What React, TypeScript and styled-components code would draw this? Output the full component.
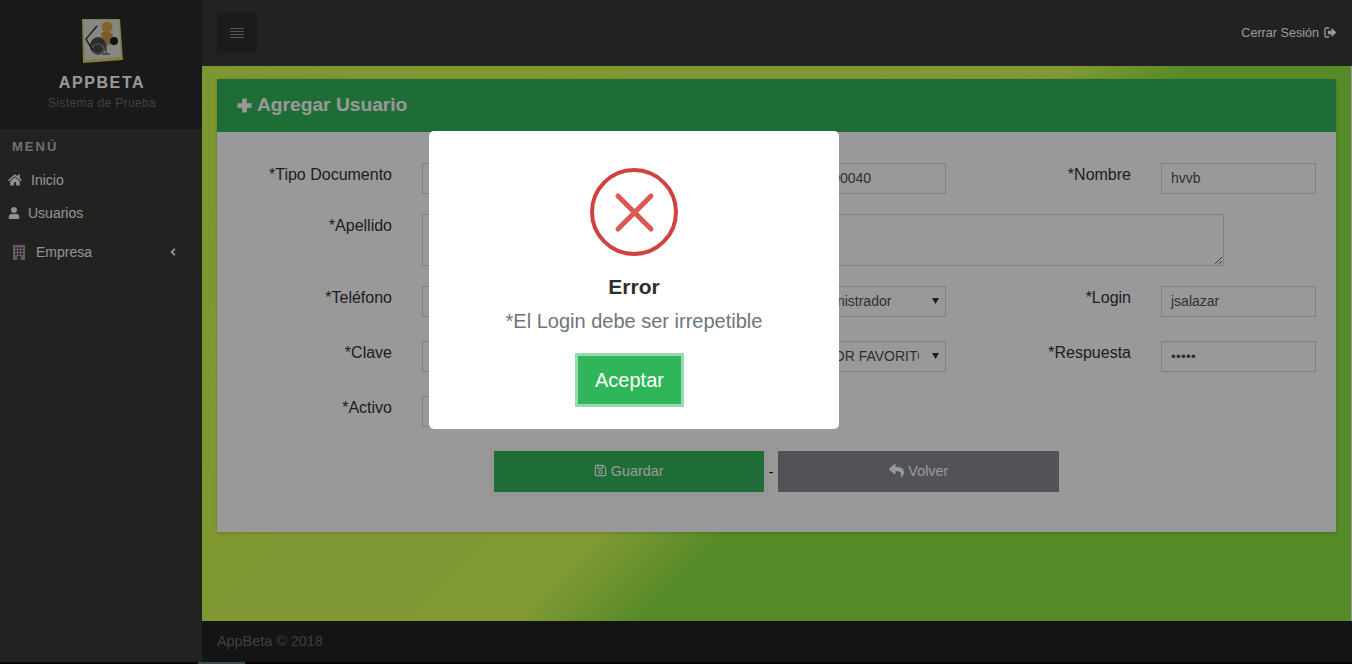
import styled, { createGlobalStyle } from "styled-components";
import { FaAngleLeft, FaHome, FaRegSave, FaReply, FaUser } from "react-icons/fa";

const GlobalStyle = createGlobalStyle`
  html, body {
    margin: 0;
    padding: 0;
    height: 664px;
    overflow: hidden;
    background: #000;
    font-family: "Liberation Sans", Arial, sans-serif;
  }
`;

const Page = styled.div`
  position: relative;
  display: flex;
  flex-direction: column;
  width: 1352px;
  height: 664px;
  overflow: hidden;
`;

const Shell = styled.div`
  display: flex;
  flex: 1;
  min-height: 0;
`;

const Sidebar = styled.aside`
  display: flex;
  flex-direction: column;
  width: 202px;
  flex-shrink: 0;
  background: #3a3a38;
`;

const Brand = styled.div`
  display: flex;
  flex-direction: column;
  align-items: center;
  height: 129px;
  padding: 18px 0 0 2px;
  box-sizing: border-box;
  background: #2b2b2b;
`;

const BrandName = styled.div`
  margin-top: 10px;
  font-size: 16px;
  line-height: 18px;
  font-weight: bold;
  letter-spacing: 1.6px;
  color: #fff;
`;

const BrandSub = styled.div`
  margin-top: 4px;
  font-size: 12px;
  line-height: 14px;
  letter-spacing: 0.35px;
  color: #6e6e6e;
`;

const MenuTitle = styled.div`
  padding: 10px 0 0 12px;
  font-size: 13px;
  line-height: 15px;
  font-weight: bold;
  letter-spacing: 2px;
  color: #b8bcc2;
`;

const MenuList = styled.nav`
  display: flex;
  flex-direction: column;
  margin-top: 9px;
`;

const MenuItem = styled.a<{ $gap: number; $height: number; $indent?: number }>`
  display: flex;
  align-items: center;
  gap: ${(p) => p.$gap}px;
  height: ${(p) => p.$height}px;
  padding: 0 23px 0 ${(p) => p.$indent ?? 8}px;
  font-size: 14px;
  color: #fff;
  opacity: 0.95;

  svg {
    flex-shrink: 0;
  }
`;

const Chevron = styled.span`
  display: flex;
  margin-left: auto;
  font-size: 12px;
`;

const Main = styled.div`
  display: flex;
  flex: 1;
  flex-direction: column;
  min-width: 0;
`;

const TopBar = styled.header`
  display: flex;
  align-items: center;
  justify-content: space-between;
  height: 66px;
  flex-shrink: 0;
  padding: 0 15px;
  box-sizing: border-box;
  background: #3a3a38;
`;

const MenuToggle = styled.button`
  display: flex;
  align-items: center;
  justify-content: center;
  width: 40px;
  height: 40px;
  margin-top: -1px;
  padding: 0;
  border: 0;
  background: #2e2e2e;
`;

const Logout = styled.a`
  display: flex;
  align-items: center;
  gap: 5px;
  margin-bottom: 1px;
  font-size: 12.6px;
  color: #fff;
`;

const Content = styled.main`
  flex: 1;
  min-height: 0;
  padding: 13px 15px 0;
  border-right: 1px solid #fff;
  background: linear-gradient(135deg, #d2fb52 0%, #d6ff56 51%, #91e844 58%, #91e844 100%);
`;

const Panel = styled.section`
  width: 1119px;
  height: 453px;
  background: #fff;
  box-shadow: 0 1px 3px rgba(0, 0, 0, 0.2);
`;

const PanelHead = styled.h2`
  display: flex;
  align-items: center;
  gap: 5px;
  height: 53px;
  margin: 0;
  padding: 0 0 1px 20px;
  box-sizing: border-box;
  font-size: 19.2px;
  font-weight: bold;
  color: #fff;
  background: #35b65b;
`;

const PanelBody = styled.form`
  padding-top: 31px;
`;

const FormRow = styled.div<{ $after: number }>`
  display: grid;
  grid-template-columns: 175px 155px 154px repeat(3, 155px);
  column-gap: 30px;
  margin-bottom: ${(p) => p.$after}px;
`;

const FieldLabel = styled.label`
  padding-top: 3px;
  font-size: 16px;
  line-height: 18px;
  text-align: right;
  color: #333;
`;

const TextField = styled.div`
  display: flex;
  align-items: center;
  height: 31px;
  padding: 0 8px 1px 9px;
  box-sizing: border-box;
  overflow: hidden;
  font-size: 14px;
  white-space: nowrap;
  color: #495057;
  border: 1px solid #ced4da;
  background: #fff;
`;

const Dots = styled.span`
  font-size: 13.5px;
  letter-spacing: 0.3px;
`;

const SelectField = styled(TextField)`
  padding: 0 6px 1px 13px;
`;

const SelectText = styled.span`
  flex: 1;
  overflow: hidden;
  min-width: 0;
  margin-right: 13px;
`;

const AreaField = styled.textarea`
  grid-column: 2 / -1;
  display: block;
  width: 802px;
  height: 52px;
  margin: 0;
  padding: 6px 9px;
  box-sizing: border-box;
  font-family: inherit;
  font-size: 14px;
  color: #495057;
  border: 1px solid #ced4da;
  border-radius: 2px;
  background: #fff;
  outline: none;
`;

const Actions = styled.div`
  display: flex;
  justify-content: center;
  align-items: center;
  gap: 5px;
  font-size: 14px;
  color: #000;
`;

const ActionButton = styled.button<{ $bg: string; $width: number; $ring?: boolean }>`
  display: flex;
  align-items: center;
  justify-content: center;
  gap: 4px;
  width: ${(p) => p.$width}px;
  height: 41px;
  padding: 0 0 2px;
  border: 0;
  font-family: inherit;
  font-size: 14.4px;
  color: #fff;
  background: ${(p) => p.$bg};
  box-shadow: ${(p) => (p.$ring ? "0 0 0 3px rgba(255, 255, 255, 0.5), 0 0 0 4px rgba(0, 0, 0, 0.04)" : "none")};
`;

const Footer = styled.footer`
  display: flex;
  align-items: center;
  height: 41px;
  flex-shrink: 0;
  padding: 0 15px 2px;
  box-sizing: border-box;
  font-size: 14.4px;
  color: #6b6b6b;
  background: #222;
`;

const BottomStrip = styled.div`
  display: flex;
  height: 2px;
  flex-shrink: 0;
  background: #0b0b0b;
`;

const StripTab = styled.span`
  width: 47px;
  margin-left: 198px;
  background: #67797a;
`;

const Backdrop = styled.div`
  position: absolute;
  inset: 0;
  padding: 131px 0 0 429px;
  background: rgba(0, 0, 0, 0.4);
`;

const Modal = styled.div`
  display: flex;
  flex-direction: column;
  align-items: center;
  width: 410px;
  height: 298px;
  padding-top: 37px;
  box-sizing: border-box;
  border-radius: 5px;
  background: #fff;
`;

const ModalTitle = styled.div`
  margin-top: 19px;
  font-size: 21px;
  line-height: 24px;
  font-weight: bold;
  color: #2f2f2f;
`;

const ModalText = styled.div`
  margin-top: 10px;
  font-size: 20px;
  line-height: 24px;
  color: #6c757d;
`;

const ConfirmButton = styled.button`
  width: 103px;
  height: 48px;
  margin: 23px 9px 0 0;
  padding: 0;
  border: 0;
  font-family: inherit;
  font-size: 20px;
  color: #fff;
  background: #30b55b;
  box-shadow: 0 0 0 3px #97dcae;
`;

function Logo() {
  return (
    <svg width="46" height="46" viewBox="0 0 46 46">
      <path d="M3 1 L41 1 L44 42 L4 45 Z" fill="#d8d268" />
      <path d="M4.5 2 L40 2 L42 39 L6 42 Z" fill="#e2e2da" />
      <circle cx="28" cy="9" r="5.5" fill="#d9a84a" />
      <path d="M22 15 Q28 12 34 16 L32 27 L24 26 Z" fill="#c99a45" />
      <ellipse cx="19" cy="28" rx="8" ry="9" fill="#4a4a4a" />
      <ellipse cx="19" cy="31" rx="6" ry="5" fill="none" stroke="#9a9a9a" strokeWidth="1.2" />
      <circle cx="35" cy="23" r="4" fill="#1c1c1c" />
      <path d="M18 8 L7 21 L14 33" fill="none" stroke="#2a2a2a" strokeWidth="1.4" />
      <path d="M27 26 L27 35 M23 36 L31 36" stroke="#666" strokeWidth="1.4" />
    </svg>
  );
}

function BarsIcon() {
  return (
    <svg width="14" height="12" viewBox="0 0 14 12">
      <path d="M0 1.5H14M0 4.5H14M0 7.5H14M0 10.5H14" stroke="#8f8f8f" strokeWidth="1" />
    </svg>
  );
}

function PlusIcon() {
  return (
    <svg width="15" height="15" viewBox="0 0 15 15">
      <path d="M5.2 0.5H9.8V5.2H14.5V9.8H9.8V14.5H5.2V9.8H0.5V5.2H5.2Z" fill="#fff" />
    </svg>
  );
}

function BuildingIcon() {
  return (
    <svg width="12" height="15" viewBox="0 0 12 15">
      <rect x="0" y="0" width="12" height="15" fill="#b798b4" />
      <path
        d="M2 2h2v2H2zM5 2h2v2H5zM8 2h2v2H8zM2 5h2v2H2zM5 5h2v2H5zM8 5h2v2H8zM2 8h2v2H2zM5 8h2v2H5zM8 8h2v2H8zM4 11h4v4H4z"
        fill="#4a4a52"
      />
    </svg>
  );
}

function SignOutIcon() {
  return (
    <svg width="13" height="11" viewBox="0 0 13 11">
      <path d="M5 1H2.2Q1 1 1 2.2V8.8Q1 10 2.2 10H5" fill="none" stroke="#fff" strokeWidth="1.3" />
      <path d="M4 3.7H7.5V1L12.5 5.5L7.5 10V7.3H4Z" fill="#fff" />
    </svg>
  );
}

function SelectArrow() {
  return (
    <svg width="7" height="6" viewBox="0 0 7 6">
      <path d="M0 0H7L3.5 6Z" fill="#333" />
    </svg>
  );
}

function ErrorIcon() {
  return (
    <svg width="88" height="88" viewBox="0 0 88 88">
      <circle cx="44" cy="44" r="42" fill="none" stroke="#d0423e" strokeWidth="4" />
      <path d="M28 28L61 61M61 28L28 61" stroke="#dc5853" strokeWidth="5" strokeLinecap="round" />
    </svg>
  );
}

export default function App() {
  return (
    <Page>
      <GlobalStyle />
      <Shell>
        <Sidebar>
          <Brand>
            <Logo />
            <BrandName>APPBETA</BrandName>
            <BrandSub>Sistema de Prueba</BrandSub>
          </Brand>
          <MenuTitle>MENÚ</MenuTitle>
          <MenuList>
            <MenuItem $gap={9} $height={33}>
              <FaHome size={14} />
              Inicio
            </MenuItem>
            <MenuItem $gap={8} $height={33}>
              <FaUser size={12} />
              Usuarios
            </MenuItem>
            <MenuItem $gap={11} $height={46} $indent={13}>
              <BuildingIcon />
              Empresa
              <Chevron>
                <FaAngleLeft />
              </Chevron>
            </MenuItem>
          </MenuList>
        </Sidebar>
        <Main>
          <TopBar>
            <MenuToggle>
              <BarsIcon />
            </MenuToggle>
            <Logout>
              Cerrar Sesión
              <SignOutIcon />
            </Logout>
          </TopBar>
          <Content>
            <Panel>
              <PanelHead>
                <PlusIcon />
                Agregar Usuario
              </PanelHead>
              <PanelBody>
                <FormRow $after={20}>
                  <FieldLabel>*Tipo Documento</FieldLabel>
                  <SelectField>
                    <SelectText>Cédula</SelectText>
                    <SelectArrow />
                  </SelectField>
                  <FieldLabel>*Documento</FieldLabel>
                  <TextField>100000040</TextField>
                  <FieldLabel>*Nombre</FieldLabel>
                  <TextField>hvvb</TextField>
                </FormRow>
                <FormRow $after={20}>
                  <FieldLabel>*Apellido</FieldLabel>
                  <AreaField defaultValue="" />
                </FormRow>
                <FormRow $after={24}>
                  <FieldLabel>*Teléfono</FieldLabel>
                  <TextField>3000000</TextField>
                  <FieldLabel>*Perfil</FieldLabel>
                  <SelectField>
                    <SelectText>Administrador</SelectText>
                    <SelectArrow />
                  </SelectField>
                  <FieldLabel>*Login</FieldLabel>
                  <TextField>jsalazar</TextField>
                </FormRow>
                <FormRow $after={24}>
                  <FieldLabel>*Clave</FieldLabel>
                  <TextField>
                    <Dots>•••••</Dots>
                  </TextField>
                  <FieldLabel>*Pregunta</FieldLabel>
                  <SelectField>
                    <SelectText>COLOR FAVORITO</SelectText>
                    <SelectArrow />
                  </SelectField>
                  <FieldLabel>*Respuesta</FieldLabel>
                  <TextField>
                    <Dots>•••••</Dots>
                  </TextField>
                </FormRow>
                <FormRow $after={24}>
                  <FieldLabel>*Activo</FieldLabel>
                  <SelectField>
                    <SelectText>Si</SelectText>
                    <SelectArrow />
                  </SelectField>
                </FormRow>
                <Actions>
                  <ActionButton type="button" $bg="#35b65b" $width={270} $ring>
                    <FaRegSave size={13} />
                    Guardar
                  </ActionButton>
                  -
                  <ActionButton type="button" $bg="#888b91" $width={281}>
                    <FaReply size={15} />
                    Volver
                  </ActionButton>
                </Actions>
              </PanelBody>
            </Panel>
          </Content>
          <Footer>AppBeta © 2018</Footer>
        </Main>
      </Shell>
      <BottomStrip>
        <StripTab />
      </BottomStrip>
      <Backdrop>
        <Modal>
          <ErrorIcon />
          <ModalTitle>Error</ModalTitle>
          <ModalText>*El Login debe ser irrepetible</ModalText>
          <ConfirmButton type="button">Aceptar</ConfirmButton>
        </Modal>
      </Backdrop>
    </Page>
  );
}
